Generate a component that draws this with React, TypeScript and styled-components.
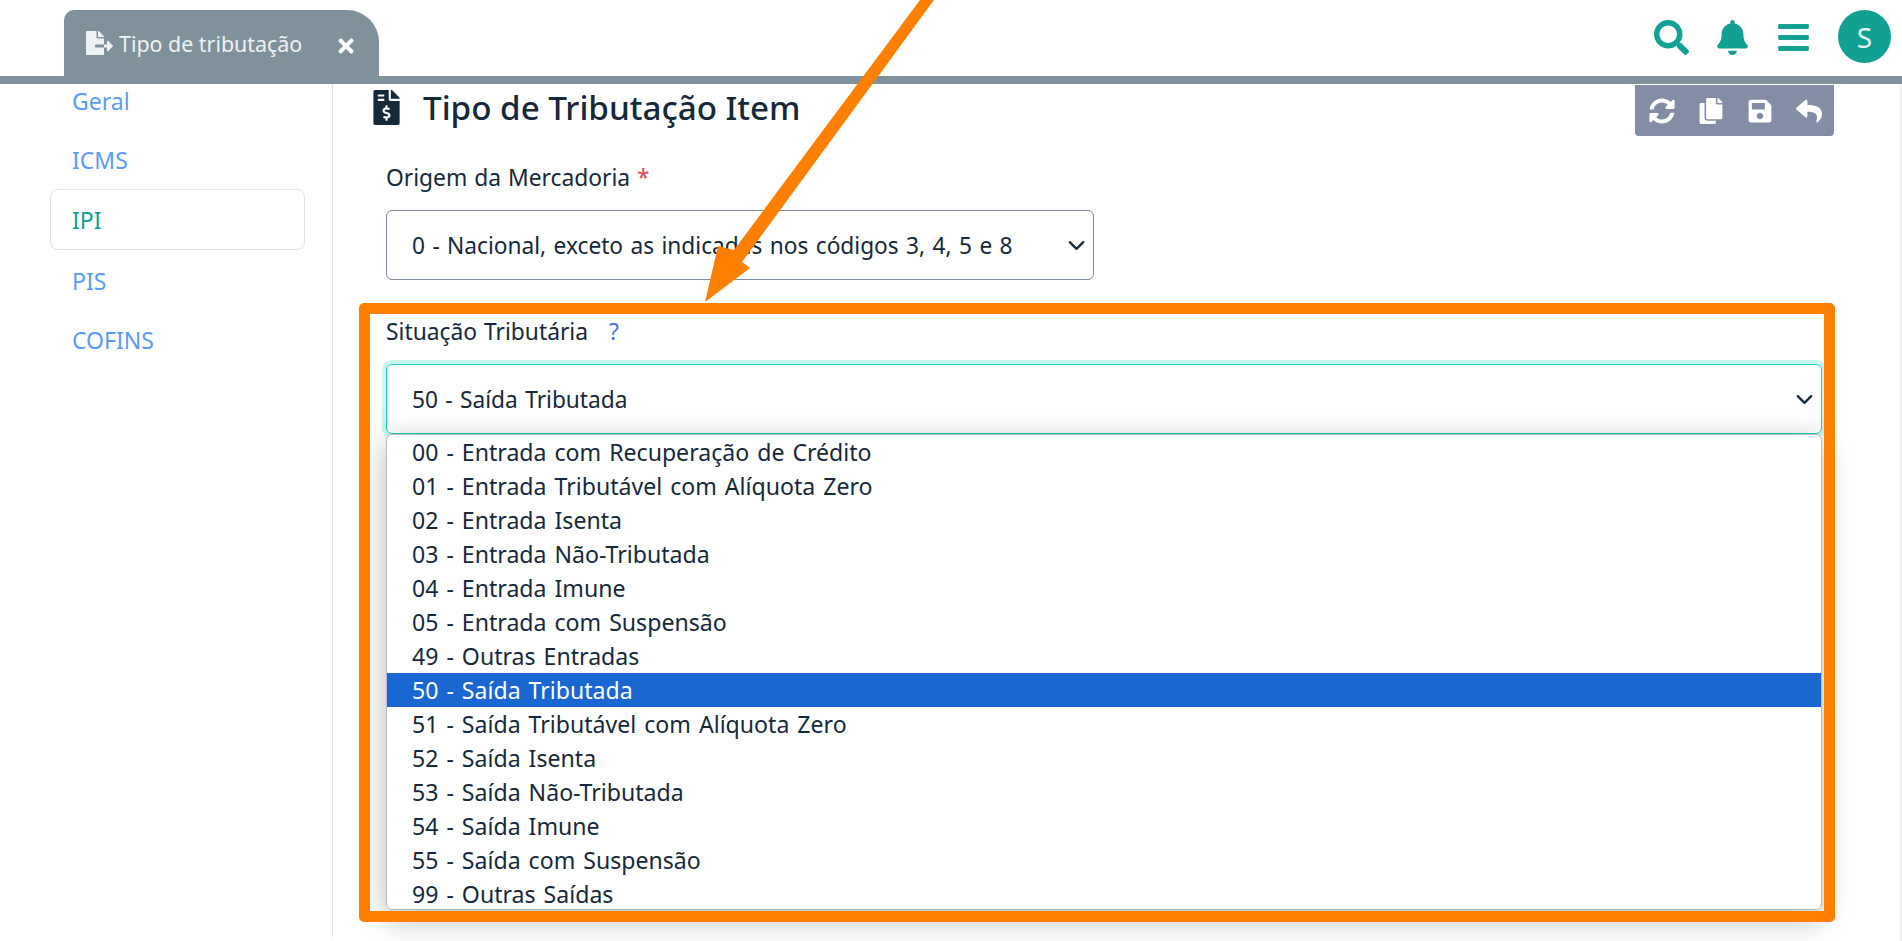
import styled, { createGlobalStyle } from "styled-components";
import {
  FaBars,
  FaBell,
  FaCopy,
  FaFileExport,
  FaFileInvoiceDollar,
  FaReply,
  FaSave,
  FaSearch,
  FaSyncAlt,
  FaTimes,
} from "react-icons/fa";
import { FiChevronDown } from "react-icons/fi";

const NAV_ITEMS = ["Geral", "ICMS", "IPI", "PIS", "COFINS"];

const OPTIONS = [
  "00 - Entrada com Recuperação de Crédito",
  "01 - Entrada Tributável com Alíquota Zero",
  "02 - Entrada Isenta",
  "03 - Entrada Não-Tributada",
  "04 - Entrada Imune",
  "05 - Entrada com Suspensão",
  "49 - Outras Entradas",
  "50 - Saída Tributada",
  "51 - Saída Tributável com Alíquota Zero",
  "52 - Saída Isenta",
  "53 - Saída Não-Tributada",
  "54 - Saída Imune",
  "55 - Saída com Suspensão",
  "99 - Outras Saídas",
];

export default function App() {
  return (
    <Page>
      <GlobalStyle />
      <Header>
        <Tab>
          <TabIcon />
          <TabLabel>Tipo de tributação</TabLabel>
          <TabClose />
        </Tab>
        <HeaderActions>
          <FaSearch size={35} />
          <FaBell size={35} />
          <FaBars size={35} />
          <Avatar>S</Avatar>
        </HeaderActions>
      </Header>
      <Body>
        <Sidebar>
          <NavList>
            {NAV_ITEMS.map((item) => (
              <NavItem key={item} $active={item === "IPI"}>
                {item}
              </NavItem>
            ))}
          </NavList>
        </Sidebar>
        <Main>
          <TitleRow>
            <Title>
              <FaFileInvoiceDollar size={35} />
              Tipo de Tributação Item
            </Title>
            <Toolbar>
              <FaSyncAlt size={26} />
              <FaCopy size={26} />
              <FaSave size={26} />
              <FaReply size={26} />
            </Toolbar>
          </TitleRow>
          <Field $top={25}>
            <Label>
              Origem da Mercadoria <Required>*</Required>
            </Label>
            <Select $width={708}>
              0 - Nacional, exceto as indicadas nos códigos 3, 4, 5 e 8
              <Chevron />
            </Select>
          </Field>
          <Field $top={35}>
            <Label>
              Situação Tributária <Help>?</Help>
            </Label>
            <Select $width={1436} $focused>
              50 - Saída Tributada
              <Chevron />
            </Select>
            <OptionList>
              {OPTIONS.map((option) => (
                <Option key={option} $selected={option.startsWith("50")}>
                  {option}
                </Option>
              ))}
            </OptionList>
            <Highlight />
          </Field>
        </Main>
      </Body>
      <Arrow viewBox="0 0 1902 941">
        <polygon points="920,0 934,0 742,262 750,268 705,302 718,246 734,250" />
      </Arrow>
    </Page>
  );
}

const GlobalStyle = createGlobalStyle`
  html, body {
    margin: 0;
    padding: 0;
    background: #fff;
  }
  body {
    font-family: "Noto Sans", "Open Sans", sans-serif;
    color: #16293a;
  }
`;

const Page = styled.div`
  position: relative;
  width: 1902px;
  height: 941px;
  overflow: hidden;
`;

const Header = styled.header`
  position: relative;
  z-index: 2;
  height: 66px;
  padding: 10px 11px 0 64px;
  display: flex;
  justify-content: space-between;
  align-items: flex-start;
  background: #fff;
  border-bottom: 8px solid #7f929c;
`;

const Tab = styled.div`
  width: 315px;
  height: 66px;
  padding: 0 24px 0 22px;
  box-sizing: border-box;
  display: flex;
  align-items: center;
  border-radius: 10px 32px 0 0;
  background: #7f929c;
  color: #eef1f3;
`;

const TabIcon = styled(FaFileExport)`
  width: 27px;
  height: 24px;
  margin-right: 6px;
`;

const TabLabel = styled.span`
  flex: 1;
  font-size: 21.4px;
  margin-top: 1px;
`;

const TabClose = styled(FaTimes)`
  width: 18px;
  height: 22px;
  color: #fff;
  margin-top: 6px;
`;

const HeaderActions = styled.div`
  display: flex;
  align-items: center;
  gap: 26px;
  color: #11a092;

  svg {
    margin-top: 2px;
  }
`;

const Avatar = styled.div`
  width: 53px;
  height: 53px;
  margin-left: 1px;
  border-radius: 50%;
  display: flex;
  align-items: center;
  justify-content: center;
  background: #11a092;
  color: #e8f6f4;
  font-size: 28px;
`;

const Body = styled.div`
  display: flex;
  height: 857px;
`;

const Sidebar = styled.aside`
  width: 333px;
  height: 853px;
  box-sizing: border-box;
  border-right: 1px solid #dde0e6;
  padding: 0 27px 0 50px;
`;

const NavList = styled.nav`
  display: flex;
  flex-direction: column;
  margin-top: -13px;
`;

const NavItem = styled.a<{ $active?: boolean }>`
  height: ${({ $active }) => ($active ? "61px" : "59px")};
  margin-bottom: ${({ $active }) => ($active ? "1px" : "0")};
  padding: 0 21px;
  display: flex;
  align-items: center;
  font-size: 23px;
  box-sizing: border-box;
  border-radius: 8px;
  color: ${({ $active }) => ($active ? "#11a092" : "#5c9bf5")};
  border: 1px solid ${({ $active }) => ($active ? "#dfe2e8" : "transparent")};
`;

const Main = styled.main`
  flex: 1;
  padding: 1px 66px 0 41px;
  border-right: 2px solid #f0f0f0;
`;

const TitleRow = styled.div`
  display: flex;
  justify-content: space-between;
  align-items: flex-start;
`;

const Title = styled.h1`
  margin: 0;
  display: flex;
  align-items: center;
  gap: 19px;
  font-size: 33.2px;
  font-weight: 500;
  line-height: 46px;

  svg {
    margin: -2px 0 0 -5px;
  }
`;

const Toolbar = styled.div`
  width: 199px;
  height: 51px;
  box-sizing: border-box;
  padding: 0 12px 0 14px;
  display: flex;
  align-items: center;
  justify-content: space-between;
  border-radius: 0 0 4px 4px;
  background: #838ea6;
  color: #fff;
`;

const Field = styled.div<{ $top: number }>`
  position: relative;
  margin: ${({ $top }) => $top}px 0 0 12px;
`;

const Label = styled.label`
  display: block;
  font-size: 22.8px;
  word-spacing: 1px;
  line-height: 34px;
  margin-bottom: 15px;
`;

const Required = styled.span`
  color: #e0455f;
`;

const Help = styled.span`
  margin-left: 14px;
  color: #4a72d8;
`;

const Select = styled.div<{ $width: number; $focused?: boolean }>`
  width: ${({ $width }) => $width}px;
  height: 70px;
  box-sizing: border-box;
  padding: 0 3px 0 25px;
  display: flex;
  align-items: center;
  justify-content: space-between;
  font-size: 22.7px;
  word-spacing: 1.5px;
  border-radius: 6px;
  border: 1px solid ${({ $focused }) => ($focused ? "#1fd0c0" : "#7f8aa3")};
  box-shadow: ${({ $focused }) => ($focused ? "0 0 0 4px #c8f5ee" : "none")};
`;

const Chevron = styled(FiChevronDown)`
  width: 27px;
  height: 27px;
  stroke-width: 2;
`;

const OptionList = styled.ul`
  position: relative;
  list-style: none;
  margin: 0;
  padding: 0;
  width: 1436px;
  height: 476px;
  box-sizing: border-box;
  border: 1px solid #b8bcc0;
  border-radius: 6px;
  background: #fff;
  box-shadow: 0 8px 32px rgba(0, 0, 0, 0.28);
`;

const Option = styled.li<{ $selected?: boolean }>`
  height: 34px;
  padding-left: 25px;
  display: flex;
  align-items: center;
  font-size: 23.1px;
  word-spacing: 2px;
  background: ${({ $selected }) => ($selected ? "#1a67d2" : "transparent")};
  color: ${({ $selected }) => ($selected ? "#fff" : "inherit")};
`;

/* orange annotation drawn on top of the field */
const Highlight = styled.div`
  position: absolute;
  left: -27px;
  top: -12px;
  width: 1476px;
  height: 619px;
  box-sizing: border-box;
  border: 11px solid #ff8000;
  border-radius: 5px;
  pointer-events: none;
`;

const Arrow = styled.svg`
  position: absolute;
  inset: 0;
  width: 1902px;
  height: 941px;
  z-index: 3;
  fill: #ff8000;
  pointer-events: none;
`;
